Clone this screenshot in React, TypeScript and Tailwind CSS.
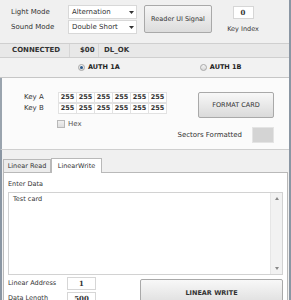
const keyBytes = ['255', '255', '255', '255', '255', '255'];

const Select = ({ value }: { value: string }) => (
  <div className="w-[69px] h-[14px] bg-white border border-[#d8d8d8] flex items-center justify-between pl-[3px] pr-[2px]">
    <span>{value}</span>
    <svg width="5" height="3" viewBox="0 0 5 3">
      <path d="M0 0h5L2.5 3z" fill="#333" />
    </svg>
  </div>
);

const KeyRow = ({ label }: { label: string }) => (
  <div className="flex items-center h-[11px]">
    <span className="w-[34px] pl-[22px] box-content text-[#333]">{label}</span>
    <div className="flex">
      {keyBytes.map((b, i) => (
        <span
          key={i}
          className="w-[19px] h-[11px] bg-white border border-[#e2e2e2] -ml-px first:ml-0 flex items-center justify-center text-[6.5px] font-bold text-[#333]"
        >
          {b}
        </span>
      ))}
    </div>
  </div>
);

const Radio = ({ checked, label }: { checked?: boolean; label: string }) => (
  <div className="flex items-center gap-[3px]">
    <span className="w-[7px] h-[7px] rounded-full border border-[#a8a8a8] bg-gradient-to-b from-[#f4f4f4] to-[#d8d8d8] flex items-center justify-center">
      {checked && <span className="w-[3px] h-[3px] rounded-full bg-[#2c5a8c]" />}
    </span>
    <span className="font-bold text-[#222]">{label}</span>
  </div>
);

export default function App() {
  return (
    <div className="w-[291px] h-[300px] overflow-hidden bg-[#f0f0f0] text-[7px] leading-none text-[#333] font-['DejaVu_Sans',sans-serif] flex flex-col border-r-[2px] border-[#8a96a3]">
      {/* top settings */}
      <div className="h-[43px] flex pt-[5px] shrink-0">
        <div className="flex flex-col gap-[1px] pl-[11px]">
          <div className="flex items-center">
            <span className="w-[57px]">Light Mode</span>
            <Select value="Alternation" />
          </div>
          <div className="flex items-center">
            <span className="w-[57px]">Sound Mode</span>
            <Select value="Double Short" />
          </div>
        </div>
        <button className="ml-[7px] w-[68px] h-[28px] rounded-[2px] border border-[#a9a9a9] bg-gradient-to-b from-[#f6f6f6] to-[#dcdcdc] text-[6.5px] text-[#333]">
          Reader UI Signal
        </button>
        <div className="ml-[11px] w-[40px] flex flex-col items-center">
          <div className="w-[21px] h-[13px] mt-[1px] bg-white border border-[#d6d6d6] flex items-center justify-center font-bold text-[7px] font-['DejaVu_Serif',serif]">
            0
          </div>
          <span className="mt-[7px] text-[6.5px]">Key Index</span>
        </div>
      </div>

      {/* status */}
      <div className="h-[15px] shrink-0 flex items-center bg-[#e8e8e8] border-y border-[#cfcfcf] font-semibold text-[#333]">
        <span className="w-[70px] pl-[12px] border-r border-[#d6d6d6] h-full flex items-center">CONNECTED</span>
        <span className="w-[29px] pl-[10px] border-r border-[#d6d6d6] h-full flex items-center">$00</span>
        <span className="pl-[5px]">DL_OK</span>
      </div>

      {/* auth */}
      <div className="h-[20px] shrink-0 flex items-center bg-[#f2f2f2] border-b border-[#c6c6c6] pl-[78px] gap-[80px] text-[6.5px]">
        <Radio checked label="AUTH 1A" />
        <Radio label="AUTH 1B" />
      </div>

      {/* keys */}
      <div className="h-[72px] shrink-0 flex bg-[#fbfbfb] border-l-[2px] border-[#9aa4ae] border-b border-b-[#cfcfcf]">
        <div className="flex flex-col pt-[14px]">
          <KeyRow label="Key A" />
          <KeyRow label="Key B" />
          <div className="flex items-center gap-[3px] ml-[55px] mt-[6px]">
            <span className="w-[8px] h-[8px] border border-[#b8b8b8] bg-gradient-to-b from-[#f0f0f0] to-[#dedede]" />
            <span className="text-[#555]">Hex</span>
          </div>
        </div>
        <div className="flex flex-col items-end ml-auto pr-[15px] pt-[14px]">
          <button className="w-[76px] h-[26px] rounded-[2px] border border-[#a9a9a9] bg-gradient-to-b from-[#f8f8f8] to-[#dadada] text-[6.5px] text-[#333]">
            FORMAT CARD
          </button>
          <div className="flex items-center mt-[9px]">
            <span className="text-[7px]">Sectors Formatted</span>
            <span className="ml-[10px] w-[22px] h-[16px] bg-[#d4d4d4] border border-[#e4e4e4]" />
          </div>
        </div>
      </div>

      {/* tabs */}
      <div className="flex-1 flex flex-col bg-[#f0f0f0] border-l-[2px] border-[#8a96a3] pl-[1px] pt-[7px]">
        <div className="flex items-end h-[15px]">
          <span className="w-[48px] h-[13px] border border-b-0 border-[#b9b9b9] bg-[#ececec] flex items-center justify-center text-[6.5px]">
            Linear Read
          </span>
          <span className="w-[51px] h-[15px] border border-b-0 border-[#b9b9b9] bg-white -mb-px relative z-10 flex items-center justify-center text-[6.5px]">
            LinearWrite
          </span>
        </div>
        <div className="flex-1 bg-white border border-[#b9b9b9] mr-[1px] px-[4px] pt-[8px] flex flex-col">
          <span className="text-[6.5px]">Enter Data</span>
          <div className="mt-[4px] h-[83px] shrink-0 border border-[#d2d2d2] flex">
            <div className="flex-1 pl-[4px] pt-[3px] text-[6.5px]">Test card</div>
            <div className="w-[12px] bg-[#f2f2f2] border-l border-[#e6e6e6] flex flex-col justify-between items-center py-[4px]">
              <svg width="4" height="3" viewBox="0 0 4 3"><path d="M2 0L4 3H0z" fill="#888" /></svg>
              <svg width="4" height="3" viewBox="0 0 4 3"><path d="M0 0h4L2 3z" fill="#888" /></svg>
            </div>
          </div>
          <div className="flex mt-[2px]">
            <div className="flex flex-col gap-[2px]">
              <div className="flex items-center">
                <span className="w-[59px] text-[6.5px]">Linear Address</span>
                <span className="w-[29px] h-[13px] bg-white border border-[#d6d6d6] flex items-center justify-center font-bold font-['DejaVu_Serif',serif]">1</span>
              </div>
              <div className="flex items-center">
                <span className="w-[59px] text-[6.5px]">Data Length</span>
                <span className="w-[29px] h-[13px] bg-white border border-[#d6d6d6] flex items-center justify-center font-bold font-['DejaVu_Serif',serif]">500</span>
              </div>
            </div>
            <button className="ml-auto mt-[2px] w-[143px] h-[30px] rounded-[2px] border border-[#a9a9a9] bg-gradient-to-b from-[#f8f8f8] to-[#dadada] text-[6.5px] font-semibold text-[#333]">
              LINEAR WRITE
            </button>
          </div>
        </div>
      </div>
    </div>
  );
}
